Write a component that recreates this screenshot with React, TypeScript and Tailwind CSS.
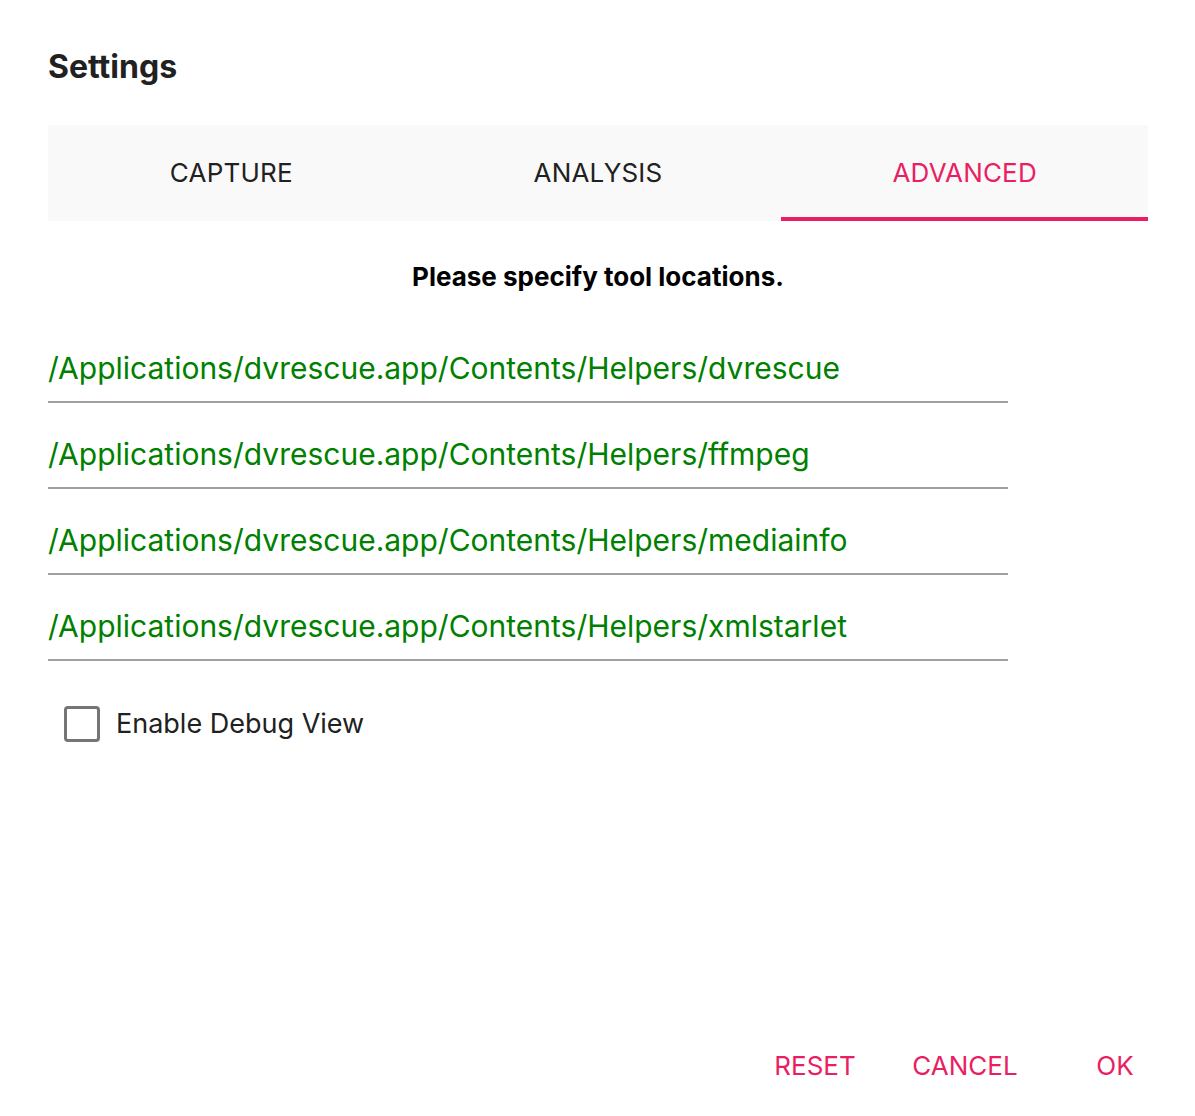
import React from 'react';

const tabs = ['CAPTURE', 'ANALYSIS', 'ADVANCED'];

const toolPaths = [
  '/Applications/dvrescue.app/Contents/Helpers/dvrescue',
  '/Applications/dvrescue.app/Contents/Helpers/ffmpeg',
  '/Applications/dvrescue.app/Contents/Helpers/mediainfo',
  '/Applications/dvrescue.app/Contents/Helpers/xmlstarlet',
];

const App = () => {
  const active = 2;

  return (
    <div
      className="w-[1195px] h-[1116px] bg-white flex flex-col pl-[48px] pr-[47px] pt-[48px] text-[#212121]"
      style={{ fontFamily: 'Inter, "Noto Sans", sans-serif' }}
    >
      <h1 className="text-[32px] leading-[38px] font-bold">Settings</h1>

      <div className="mt-[39px] h-[96px] bg-[#f9f9f9] grid grid-cols-3">
        {tabs.map((tab, index) => (
          <div key={tab} className="relative flex items-center justify-center">
            <span
              className={
                'text-[26px] leading-[32px] tracking-[0.2px] ' +
                (index === active ? 'text-[#e91e63]' : 'text-[#212121]')
              }
            >
              {tab}
            </span>
            {index === active && <div className="absolute left-0 right-0 bottom-0 h-[4px] bg-[#e91e63]" />}
          </div>
        ))}
      </div>

      <p className="mt-[40px] text-center text-[26px] leading-[32px] font-bold text-black">
        Please specify tool locations.
      </p>

      <div className="mt-[24px] w-[960px] flex flex-col">
        {toolPaths.map((path) => (
          <div key={path} className="h-[86px] border-b-2 border-[#a0a0a0] pt-[33px]">
            <span className="block text-[30px] leading-[36px] text-[#008000]">{path}</span>
          </div>
        ))}
      </div>

      <label className="mt-[45px] ml-[16px] flex items-center gap-[16px]">
        <span className="w-[36px] h-[36px] rounded-[4px] border-[3px] border-[#757575] bg-white" />
        <span className="text-[27px] leading-[32px] text-[#212121]">Enable Debug View</span>
      </label>

      <div className="mt-auto mb-[34px] -mr-[42px] flex justify-end">
        {['RESET', 'CANCEL', 'OK'].map((label) => (
          <button key={label} className="w-[150px] h-[32px] text-[26px] leading-[32px] text-[#e91e63] text-center">
            {label}
          </button>
        ))}
      </div>
    </div>
  );
};

export default App;
